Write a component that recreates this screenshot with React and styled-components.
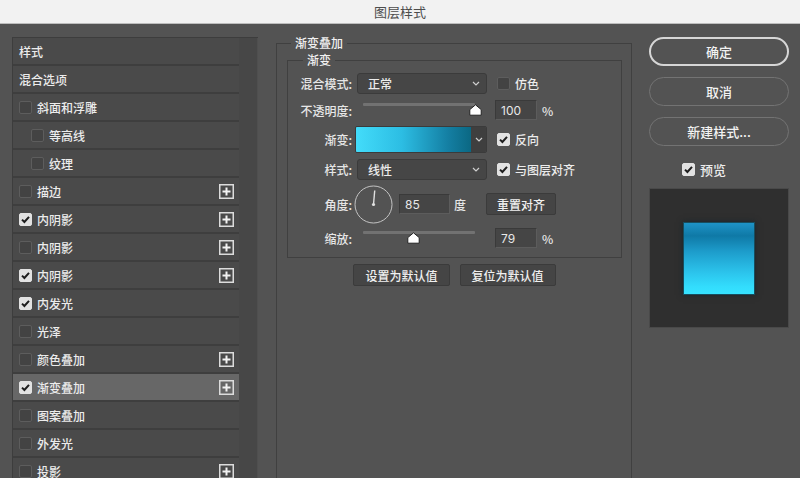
import React from 'react';
import styled, { createGlobalStyle } from 'styled-components';

const GlobalStyle = createGlobalStyle`
  html, body {
    margin: 0;
    padding: 0;
    background: #535353;
  }
  * {
    box-sizing: border-box;
  }
`;

const FONT = `"Noto Sans CJK SC", "Inter", "Liberation Sans", sans-serif`;

const Window = styled.div`
  width: 800px;
  height: 478px;
  overflow: hidden;
  display: flex;
  flex-direction: column;
  font-family: ${FONT};
  font-size: 12px;
  color: #e8e8e8;
  background: #535353;
`;

const TitleBar = styled.div`
  height: 24px;
  flex: none;
  display: flex;
  align-items: center;
  justify-content: center;
  background: #f2f2f2;
  border-bottom: 1px solid #bdbdbd;
  color: #4d4d4d;
  font-size: 13px;
`;

const Body = styled.div`
  flex: 1;
  display: flex;
  flex-direction: row;
  align-items: flex-start;
  padding-left: 12px;
  overflow: hidden;
`;

/* left style list */
const ListFrame = styled.div`
  margin-top: 13px;
  width: 246px;
  flex: none;
  display: flex;
  border-top: 1px solid #3d3d3d;
  border-left: 1px solid #3d3d3d;
`;

const List = styled.div`
  width: 227px;
  display: flex;
  flex-direction: column;
`;

const ScrollTrack = styled.div`
  width: 19px;
  align-self: stretch;
  min-height: 460px;
  background: #474747;
  border-right: 1px solid #4f4f4f;
`;

const ListRow = styled.div`
  height: 28px;
  display: flex;
  align-items: center;
  gap: 5px;
  padding-left: ${(p) => (p.$indent ? 18 : 6)}px;
  padding-right: 5px;
  background: ${(p) => (p.$active ? '#676767' : '#4a4a4a')};
  border-bottom: 2px solid #3e3e3e;
  font-weight: 500;
  color: #ececec;
`;

const RowText = styled.span`
  flex: 1;
`;

const Box = styled.span`
  width: 13px;
  height: 13px;
  flex: none;
  display: inline-flex;
  align-items: center;
  justify-content: center;
  border-radius: 2px;
  background: ${(p) => (p.$on ? '#e2e2e2' : '#434343')};
  border: 1px solid ${(p) => (p.$on ? '#e2e2e2' : '#5d5d5d')};
`;

const CheckBox = ({ on }) => (
  <Box $on={on}>
    {on && (
      <svg width="11" height="11" viewBox="0 0 11 11">
        <path d="M2 5.6 L4.4 8 L9 2.8" fill="none" stroke="#1e1e1e" strokeWidth="2" />
      </svg>
    )}
  </Box>
);

const PlusIcon = () => (
  <svg width="15" height="15" viewBox="0 0 15 15">
    <rect x="0.75" y="0.75" width="13.5" height="13.5" fill="none" stroke="#dcdcdc" strokeWidth="1.5" />
    <path d="M3.5 7.5 H11.5 M7.5 3.5 V11.5" stroke="#f2f2f2" strokeWidth="2" />
  </svg>
);

/* middle settings */
const Middle = styled.div`
  margin-left: 18px;
  padding-top: 12px;
  width: 356px;
  flex: none;
`;

const OuterSet = styled.fieldset`
  margin: 0;
  padding: 3px 9px 0 10px;
  min-width: 0;
  height: 470px;
  border: 1px solid #404040;
`;

const Legend = styled.legend`
  padding: 0 4px;
  margin-left: ${(p) => p.$offset}px;
  line-height: 14px;
  font-weight: 500;
  color: #f0f0f0;
`;

const InnerSet = styled.fieldset`
  margin: 0;
  padding: 6px 0 9px 0;
  min-width: 0;
  border: 1px solid #404040;
`;

const Row = styled.div`
  height: ${(p) => p.$h}px;
  margin-bottom: ${(p) => p.$gap || 0}px;
  display: flex;
  align-items: center;
`;

const Label = styled.span`
  width: 64px;
  flex: none;
  text-align: right;
  margin-right: 5px;
  font-weight: 500;
  color: #e6e6e6;
`;

const Select = styled.div`
  width: 130px;
  height: 21px;
  display: flex;
  align-items: center;
  justify-content: space-between;
  padding: 0 6px 0 10px;
  background: #464646;
  border: 1px solid #3b3b3b;
  border-radius: 3px;
  font-weight: 500;
  color: #ececec;
`;

const Chevron = () => (
  <svg width="8" height="5" viewBox="0 0 8 5">
    <path d="M1 1 L4 4 L7 1" fill="none" stroke="#cfcfcf" strokeWidth="1.2" />
  </svg>
);

const CheckLabel = styled.label`
  display: flex;
  align-items: center;
  gap: 5px;
  margin-left: 10px;
  font-weight: 500;
  color: #ececec;
`;

const SliderBox = styled.div`
  position: relative;
  width: 112px;
  height: 20px;
  margin-left: ${(p) => p.$left}px;
`;

const Track = styled.div`
  margin-top: 3px;
  height: 3px;
  background: #727272;
  border-radius: 1px;
`;

const Thumb = styled.svg`
  position: absolute;
  top: 4px;
  transform: translateX(-6px);
`;

const Slider = ({ value, left }) => (
  <SliderBox $left={left}>
    <Track />
    <Thumb width="13" height="12" viewBox="0 0 13 12" style={{ left: `${value}%` }}>
      <path d="M6.5 0.8 L12.2 5.6 V11.2 H0.8 V5.6 Z" fill="#ffffff" stroke="#222" strokeWidth="1" />
    </Thumb>
  </SliderBox>
);

const Field = styled.div`
  width: ${(p) => p.$w}px;
  height: 20px;
  margin-left: ${(p) => p.$left}px;
  display: flex;
  align-items: center;
  padding-left: 5px;
  background: #454545;
  border: 1px solid #3a3a3a;
  border-bottom-color: #5c5c5c;
  border-right-color: #5c5c5c;
  font-family: "Inter", "Liberation Sans", sans-serif;
  font-size: 12px;
  color: #e8e8e8;
`;

const Unit = styled.span`
  margin-left: ${(p) => p.$left || 5}px;
  font-weight: 500;
  color: #e6e6e6;
`;

const GradientPicker = styled.div`
  width: 132px;
  height: 27px;
  margin-left: -2px;
  display: flex;
  border: 1px solid #3b3b3b;
  border-radius: 2px;
  overflow: hidden;
`;

const Swatch = styled.div`
  flex: 1;
  background: linear-gradient(to right, #43dcfa 0%, #2cbde3 40%, #147fa3 80%, #0b6883 100%);
`;

const SwatchDrop = styled.div`
  width: 15px;
  display: flex;
  align-items: center;
  justify-content: center;
  background: #3f3f3f;
`;

const Dial = styled.svg`
  flex: none;
  margin-left: -3px;
`;

const FlatButton = styled.div`
  height: 22px;
  margin-left: ${(p) => p.$left || 0}px;
  padding: 0 ${(p) => p.$pad || 10}px;
  display: flex;
  align-items: center;
  justify-content: center;
  background: #454545;
  border: 1px solid #3b3b3b;
  border-radius: 2px;
  font-weight: 500;
  color: #f0f0f0;
`;

const DefaultsRow = styled.div`
  margin-top: 6px;
  display: flex;
  justify-content: center;
  gap: 10px;
`;

/* right column */
const Right = styled.div`
  margin-left: 17px;
  padding-top: 13px;
  width: 140px;
  flex: none;
  display: flex;
  flex-direction: column;
`;

const Pill = styled.div`
  height: 29px;
  margin-bottom: 11px;
  display: flex;
  align-items: center;
  justify-content: center;
  border-radius: 15px;
  border: ${(p) => (p.$primary ? '2px solid #d6d6d6' : '1.5px solid #737373')};
  font-size: 13px;
  font-weight: 500;
  color: #f2f2f2;
`;

const PreviewCheck = styled.label`
  height: 16px;
  margin-top: 4px;
  padding-left: 33px;
  display: flex;
  align-items: center;
  gap: 5px;
  font-size: 13px;
  font-weight: 500;
  color: #ececec;
`;

const PreviewBox = styled.div`
  margin-top: 11px;
  width: 140px;
  height: 140px;
  display: flex;
  align-items: center;
  justify-content: center;
  background: #2f2f2f;
  border: 1px solid #494949;
`;

const PreviewSquare = styled.div`
  width: 70px;
  height: 71px;
  background: linear-gradient(
    to bottom,
    #1e93c6 0%,
    #0f79a6 18%,
    #1d9ccb 40%,
    #2cc4ec 70%,
    #33ddfd 90%,
    #36e2ff 100%
  );
  box-shadow: 0 0 0 1px #174d5e, 0 0 6px 1px rgba(10, 30, 40, 0.6);
`;

const styles = [
  { label: '样式' },
  { label: '混合选项' },
  { label: '斜面和浮雕', check: false },
  { label: '等高线', check: false, indent: true },
  { label: '纹理', check: false, indent: true },
  { label: '描边', check: false, plus: true },
  { label: '内阴影', check: true, plus: true },
  { label: '内阴影', check: false, plus: true },
  { label: '内阴影', check: true, plus: true },
  { label: '内发光', check: true },
  { label: '光泽', check: false },
  { label: '颜色叠加', check: false, plus: true },
  { label: '渐变叠加', check: true, plus: true, active: true },
  { label: '图案叠加', check: false },
  { label: '外发光', check: false },
  { label: '投影', check: false, plus: true },
];

const angle = 85;
const rad = (angle * Math.PI) / 180;
const dialEnd = { x: 19.5 + 14 * Math.cos(rad), y: 19.5 - 14 * Math.sin(rad) };

export default function App() {
  return (
    <Window>
      <GlobalStyle />
      <TitleBar>图层样式</TitleBar>
      <Body>
        <ListFrame>
          <List>
            {styles.map((s, i) => (
              <ListRow key={i} $indent={s.indent} $active={s.active}>
                {s.check !== undefined && <CheckBox on={s.check} />}
                <RowText>{s.label}</RowText>
                {s.plus && <PlusIcon />}
              </ListRow>
            ))}
          </List>
          <ScrollTrack />
        </ListFrame>

        <Middle>
          <OuterSet>
            <Legend $offset={4}>渐变叠加</Legend>
            <InnerSet>
              <Legend $offset={15}>渐变</Legend>
              <Row $h={21} $gap={6}>
                <Label>混合模式:</Label>
                <Select>
                  正常
                  <Chevron />
                </Select>
                <CheckLabel>
                  <CheckBox on={false} />
                  仿色
                </CheckLabel>
              </Row>
              <Row $h={20} $gap={6}>
                <Label>不透明度:</Label>
                <Slider value={100} left={6} />
                <Field $w={42} $left={20}>100</Field>
                <Unit>%</Unit>
              </Row>
              <Row $h={27} $gap={6}>
                <Label>渐变:</Label>
                <GradientPicker>
                  <Swatch />
                  <SwatchDrop>
                    <Chevron />
                  </SwatchDrop>
                </GradientPicker>
                <CheckLabel>
                  <CheckBox on={true} />
                  反向
                </CheckLabel>
              </Row>
              <Row $h={21} $gap={4}>
                <Label>样式:</Label>
                <Select>
                  线性
                  <Chevron />
                </Select>
                <CheckLabel>
                  <CheckBox on={true} />
                  与图层对齐
                </CheckLabel>
              </Row>
              <Row $h={40} $gap={4}>
                <Label>角度:</Label>
                <Dial width="39" height="39" viewBox="0 0 39 39">
                  <circle cx="19.5" cy="19.5" r="18.5" fill="none" stroke="#c4c4c4" strokeWidth="1" />
                  <line x1="19.5" y1="19.5" x2={dialEnd.x} y2={dialEnd.y} stroke="#e0e0e0" strokeWidth="1.4" />
                  <circle cx="19.5" cy="19.5" r="1.6" fill="#e0e0e0" />
                </Dial>
                <Field $w={51} $left={6}>85</Field>
                <Unit $left={4}>度</Unit>
                <FlatButton $left={20} $pad={10}>重置对齐</FlatButton>
              </Row>
              <Row $h={20}>
                <Label>缩放:</Label>
                <Slider value={45} left={6} />
                <Field $w={42} $left={20}>79</Field>
                <Unit>%</Unit>
              </Row>
            </InnerSet>
            <DefaultsRow>
              <FlatButton $pad={11}>设置为默认值</FlatButton>
              <FlatButton $pad={11}>复位为默认值</FlatButton>
            </DefaultsRow>
          </OuterSet>
        </Middle>

        <Right>
          <Pill $primary>确定</Pill>
          <Pill>取消</Pill>
          <Pill>新建样式...</Pill>
          <PreviewCheck>
            <CheckBox on={true} />
            预览
          </PreviewCheck>
          <PreviewBox>
            <PreviewSquare />
          </PreviewBox>
        </Right>
      </Body>
    </Window>
  );
}
